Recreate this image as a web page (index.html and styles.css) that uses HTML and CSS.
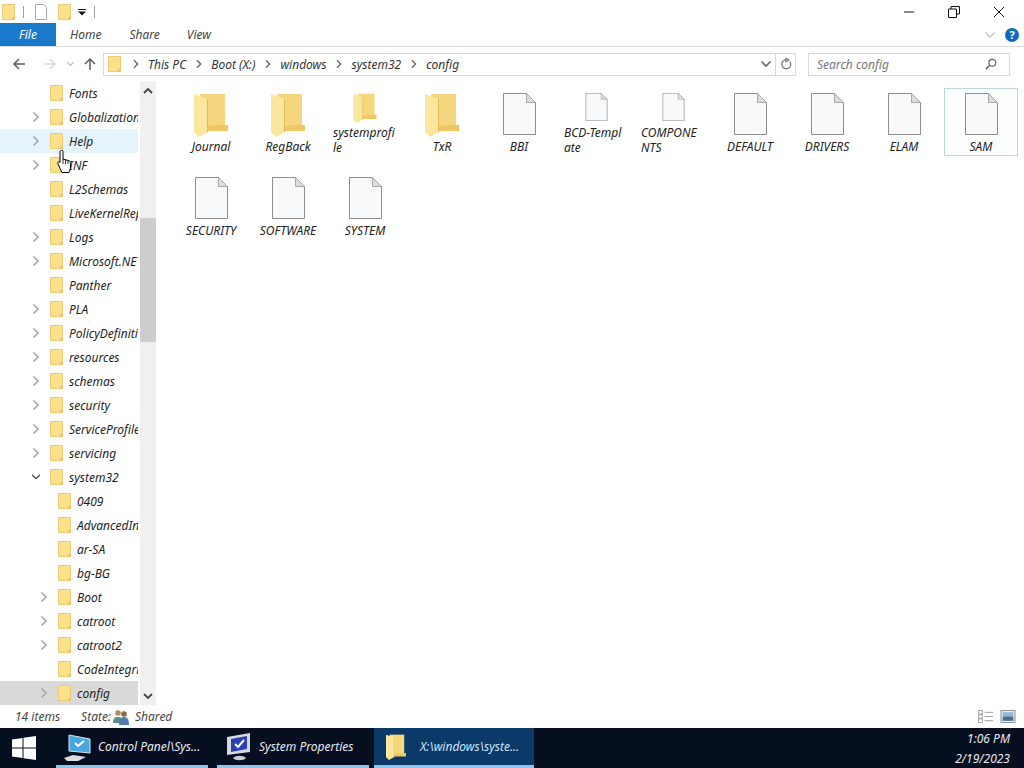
FILE: index.html
```html
<!DOCTYPE html>
<html lang="en">

<head>
  <meta charset="UTF-8" />
  <title>config</title>
  <link rel="stylesheet" href="styles.css">
</head>

<body>
  <svg class="defs" width="0" height="0">
    <symbol id="tree-folder" viewBox="0 0 13 16">
      <path d="M.5.5h12v15H.5z" fill="#fde08a" stroke="#eccb74" />
      <path d="M9 15.5l3.500-4v4z" fill="#e8c262" />
    </symbol>
    <symbol id="big-folder" viewBox="0 0 34 44">
      <path d="M6 1h25v35H6z" fill="#f5d67e" />
      <path d="M24 32h10v6H6v-4z" fill="#eec663" />
      <path d="M0 1l14 5v33l-9 5-5-5z" fill="#fbe69f" />
      <path d="M13 6h1v33l-1 .5z" fill="#e4bd5b" />
    </symbol>
    <symbol id="file" viewBox="0 0 33 42">
      <path d="M.5.500h23l9 9v32H.5z" fill="#f8f9fa" stroke="#8e8e8e" />
      <path d="M23.500.500v9h9z" fill="#dcdcdc" stroke="#a8a8a8" />
    </symbol>
    <symbol id="chev-right" viewBox="0 0 10 12">
      <path d="M2.500 1.500L7 6l-4.500 4.500" fill="none" stroke="currentColor" stroke-width="1.600" />
    </symbol>
    <symbol id="chev-down" viewBox="0 0 12 10">
      <path d="M1.500 2.500L6 7l4.500-4.500" fill="none" stroke="currentColor" stroke-width="1.600" />
    </symbol>
  </svg>

  <div class="window">
    <header class="titlebar">
      <div class="quick">
        <svg class="qa-folder"><use href="#tree-folder" /></svg>
        <span class="qa-sep"></span>
        <svg class="qa-file" viewBox="0 0 12 16"><path d="M.5.500h8l3 3v12H.5z" fill="#fff" stroke="#a9a9a9" /></svg>
        <svg class="qa-folder"><use href="#tree-folder" /></svg>
        <svg class="qa-drop" viewBox="0 0 8 8"><path d="M0 1h8v1H0zM0 3.500h8L4 7.500z" fill="#111" /></svg>
        <span class="qa-sep"></span>
      </div>
      <div class="winbtns">
        <svg viewBox="0 0 12 12"><path d="M1 6h10" stroke="#111" fill="none" /></svg>
        <svg viewBox="0 0 12 12"><path d="M.5 3h8v8.500h-8zM3 3V.5h8.500V8H8.500" stroke="#111" fill="none" /></svg>
        <svg viewBox="0 0 12 12"><path d="M1 1l10 10M11 1L1 11" stroke="#111" fill="none" /></svg>
      </div>
    </header>

    <nav class="ribbon">
      <div class="tab tab-file">File</div>
      <div class="tab tab-home">Home</div>
      <div class="tab tab-share">Share</div>
      <div class="tab tab-view">View</div>
      <svg class="ribbon-chev"><use href="#chev-down" /></svg>
      <span class="help">?</span>
    </nav>

    <div class="addressrow">
      <svg class="nav-btn nav-back" viewBox="0 0 14 14"><path d="M13 7H2M7 2L2 7l5 5" fill="none" stroke="#5f5f5f" stroke-width="1.500" /></svg>
      <svg class="nav-btn nav-fwd" viewBox="0 0 14 14"><path d="M1 7h11M7 2l5 5-5 5" fill="none" stroke="#d9d9d9" stroke-width="1.500" /></svg>
      <svg class="nav-drop"><use href="#chev-down" /></svg>
      <svg class="nav-btn nav-up" viewBox="0 0 14 14"><path d="M7 13V2M2 7l5-5 5 5" fill="none" stroke="#5f5f5f" stroke-width="1.500" /></svg>
      <div class="address">
        <svg class="addr-folder"><use href="#tree-folder" /></svg>
        <svg class="crumb-chev"><use href="#chev-right" /></svg><span>This PC</span>
        <svg class="crumb-chev"><use href="#chev-right" /></svg><span>Boot (X:)</span>
        <svg class="crumb-chev"><use href="#chev-right" /></svg><span>windows</span>
        <svg class="crumb-chev"><use href="#chev-right" /></svg><span>system32</span>
        <svg class="crumb-chev"><use href="#chev-right" /></svg><span>config</span>
        <svg class="addr-drop"><use href="#chev-down" /></svg>
        <div class="addr-refresh">
          <svg viewBox="0 0 12 12"><path d="M9.800 3.500A4.500 4.500 0 1 1 6 1.800M6 0v4l3-2z" fill="none" stroke="#777" stroke-width="1.200" /></svg>
        </div>
      </div>
      <div class="search">
        <span>Search config</span>
        <svg viewBox="0 0 14 14"><circle cx="8.500" cy="5.500" r="4" fill="none" stroke="#666" stroke-width="1.400" /><path d="M5.500 8.500L1 13" stroke="#666" stroke-width="1.800" /></svg>
      </div>
    </div>

    <main class="content">
      <aside class="treepane">
        <ul class="tree">
          <li class="row"><span class="arrow"></span><svg class="folder"><use href="#tree-folder" /></svg><span class="name">Fonts</span></li>
          <li class="row"><svg class="arrow"><use href="#chev-right" /></svg><svg class="folder"><use href="#tree-folder" /></svg><span class="name">Globalization</span></li>
          <li class="row hover"><svg class="arrow"><use href="#chev-right" /></svg><svg class="folder"><use href="#tree-folder" /></svg><span class="name">Help</span></li>
          <li class="row"><svg class="arrow"><use href="#chev-right" /></svg><svg class="folder"><use href="#tree-folder" /></svg><span class="name">INF</span></li>
          <li class="row"><span class="arrow"></span><svg class="folder"><use href="#tree-folder" /></svg><span class="name">L2Schemas</span></li>
          <li class="row"><span class="arrow"></span><svg class="folder"><use href="#tree-folder" /></svg><span class="name">LiveKernelReports</span></li>
          <li class="row"><svg class="arrow"><use href="#chev-right" /></svg><svg class="folder"><use href="#tree-folder" /></svg><span class="name">Logs</span></li>
          <li class="row"><svg class="arrow"><use href="#chev-right" /></svg><svg class="folder"><use href="#tree-folder" /></svg><span class="name">Microsoft.NET</span></li>
          <li class="row"><span class="arrow"></span><svg class="folder"><use href="#tree-folder" /></svg><span class="name">Panther</span></li>
          <li class="row"><svg class="arrow"><use href="#chev-right" /></svg><svg class="folder"><use href="#tree-folder" /></svg><span class="name">PLA</span></li>
          <li class="row"><svg class="arrow"><use href="#chev-right" /></svg><svg class="folder"><use href="#tree-folder" /></svg><span class="name">PolicyDefinitions</span></li>
          <li class="row"><svg class="arrow"><use href="#chev-right" /></svg><svg class="folder"><use href="#tree-folder" /></svg><span class="name">resources</span></li>
          <li class="row"><svg class="arrow"><use href="#chev-right" /></svg><svg class="folder"><use href="#tree-folder" /></svg><span class="name">schemas</span></li>
          <li class="row"><svg class="arrow"><use href="#chev-right" /></svg><svg class="folder"><use href="#tree-folder" /></svg><span class="name">security</span></li>
          <li class="row"><svg class="arrow"><use href="#chev-right" /></svg><svg class="folder"><use href="#tree-folder" /></svg><span class="name">ServiceProfiles</span></li>
          <li class="row"><svg class="arrow"><use href="#chev-right" /></svg><svg class="folder"><use href="#tree-folder" /></svg><span class="name">servicing</span></li>
          <li class="row"><svg class="arrow open"><use href="#chev-down" /></svg><svg class="folder"><use href="#tree-folder" /></svg><span class="name">system32</span></li>
          <li class="row sub"><span class="arrow"></span><svg class="folder"><use href="#tree-folder" /></svg><span class="name">0409</span></li>
          <li class="row sub"><span class="arrow"></span><svg class="folder"><use href="#tree-folder" /></svg><span class="name">AdvancedInstallers</span></li>
          <li class="row sub"><span class="arrow"></span><svg class="folder"><use href="#tree-folder" /></svg><span class="name">ar-SA</span></li>
          <li class="row sub"><span class="arrow"></span><svg class="folder"><use href="#tree-folder" /></svg><span class="name">bg-BG</span></li>
          <li class="row sub"><svg class="arrow"><use href="#chev-right" /></svg><svg class="folder"><use href="#tree-folder" /></svg><span class="name">Boot</span></li>
          <li class="row sub"><svg class="arrow"><use href="#chev-right" /></svg><svg class="folder"><use href="#tree-folder" /></svg><span class="name">catroot</span></li>
          <li class="row sub"><svg class="arrow"><use href="#chev-right" /></svg><svg class="folder"><use href="#tree-folder" /></svg><span class="name">catroot2</span></li>
          <li class="row sub"><span class="arrow"></span><svg class="folder"><use href="#tree-folder" /></svg><span class="name">CodeIntegrity</span></li>
          <li class="row sub current"><svg class="arrow"><use href="#chev-right" /></svg><svg class="folder"><use href="#tree-folder" /></svg><span class="name">config</span></li>
        </ul>
        <div class="scrollbar">
          <svg class="sb-arrow" viewBox="0 0 10 8"><path d="M1 6l4-4 4 4" fill="none" stroke="#444" stroke-width="1.800" /></svg>
          <div class="sb-thumb"></div>
          <svg class="sb-arrow sb-down" viewBox="0 0 10 8"><path d="M1 2l4 4 4-4" fill="none" stroke="#444" stroke-width="1.800" /></svg>
        </div>
      </aside>

      <section class="files">
        <div class="item"><svg class="ico-folder"><use href="#big-folder" /></svg><span class="label">Journal</span></div>
        <div class="item"><svg class="ico-folder"><use href="#big-folder" /></svg><span class="label">RegBack</span></div>
        <div class="item"><svg class="ico-folder"><use href="#big-folder" /></svg><span class="label">systemprofile</span></div>
        <div class="item"><svg class="ico-folder"><use href="#big-folder" /></svg><span class="label">TxR</span></div>
        <div class="item"><svg class="ico-file"><use href="#file" /></svg><span class="label">BBI</span></div>
        <div class="item"><svg class="ico-file"><use href="#file" /></svg><span class="label">BCD-Template</span></div>
        <div class="item"><svg class="ico-file"><use href="#file" /></svg><span class="label">COMPONENTS</span></div>
        <div class="item"><svg class="ico-file"><use href="#file" /></svg><span class="label">DEFAULT</span></div>
        <div class="item"><svg class="ico-file"><use href="#file" /></svg><span class="label">DRIVERS</span></div>
        <div class="item"><svg class="ico-file"><use href="#file" /></svg><span class="label">ELAM</span></div>
        <div class="item selected"><svg class="ico-file"><use href="#file" /></svg><span class="label">SAM</span></div>
        <div class="item"><svg class="ico-file"><use href="#file" /></svg><span class="label">SECURITY</span></div>
        <div class="item"><svg class="ico-file"><use href="#file" /></svg><span class="label">SOFTWARE</span></div>
        <div class="item"><svg class="ico-file"><use href="#file" /></svg><span class="label">SYSTEM</span></div>
      </section>

      <!-- mouse pointer in the shot -->
      <svg class="cursor" viewBox="0 0 14 23">
        <path d="M3 1.500c0-1.500 3-1.500 3 0V9l5 1.500c2 .5 2.500 1.500 2.500 3V18l-1.500 4.500H5L1 14c-1-2 1-3 2-1.500z" fill="#fff" stroke="#000" stroke-linejoin="round" />
        <path d="M6 9v5M8.500 10v4M11 10.500V14" stroke="#000" stroke-width=".8" />
      </svg>
    </main>

    <footer class="statusbar">
      <span class="count">14 items</span>
      <span class="state">State:</span>
      <svg class="people" viewBox="0 0 16 16">
        <circle cx="5" cy="4" r="2.800" fill="#b98a5e" />
        <path d="M0 14c0-5 2-6 5-6s5 1 5 6z" fill="#5d8f8a" />
        <circle cx="11" cy="5" r="2.800" fill="#8a6a4a" />
        <path d="M6 16c0-6 2-8 5-8s5 2 5 8z" fill="#4f7fae" />
      </svg>
      <span class="shared">Shared</span>
      <div class="views">
        <svg viewBox="0 0 17 14"><path d="M.5.500h4v4h-4zM.5 5h4v4h-4zM.5 9.500h4v4h-4z" fill="#fff" stroke="#999" /><path d="M7 2.500h9M7 7h9M7 11.500h9" stroke="#999" /></svg>
        <svg viewBox="0 0 14 12"><path d="M.5.500h13v11H.5z" fill="#e6eef5" stroke="#999" /><path d="M2 2h10v4H2z" fill="#8fb8d8" /><path d="M2 6h10v4H2z" fill="#4d6d8a" /></svg>
      </div>
    </footer>
  </div>

  <div class="taskbar">
    <svg class="start" viewBox="0 0 24 24"><path d="M0 3.500L10.500 2v9.500H0zM11.500 1.800L24 0v11.500H11.500zM0 12.500h10.500V22L0 20.500zM11.500 12.500H24V24l-12.500-1.800z" fill="#fff" /></svg>
    <div class="task">
      <svg class="task-ico" viewBox="0 0 30 30">
        <path d="M6 3l21 4v14L6 19z" fill="#4aa6dc" stroke="#d5e6f2" />
        <path d="M12 11l3 3 6-5" fill="none" stroke="#fff" stroke-width="2" />
        <path d="M1 26l9-3 13 2-8 4H4z" fill="#d9dde0" />
      </svg>
      <span>Control Panel\Sys...</span>
    </div>
    <div class="task">
      <svg class="task-ico" viewBox="0 0 30 30">
        <path d="M3 5l23-4v19L3 23z" fill="#d5d9de" />
        <path d="M7 7l16-3v13L7 20z" fill="#2a3fb0" />
        <path d="M11 12l3 3 6-7" fill="none" stroke="#fff" stroke-width="2" />
        <path d="M9 26c3-3 10-3 13 0-2 3-11 3-13 0z" fill="#c9cdd2" />
      </svg>
      <span>System Properties</span>
    </div>
    <div class="task active">
      <svg class="task-ico task-folder"><use href="#big-folder" /></svg>
      <span>X:\windows\syste...</span>
    </div>
    <div class="clock">
      <span>1:06 PM</span>
      <span>2/19/2023</span>
    </div>
  </div>
</body>

</html>
```

FILE: styles.css
```css
* {
  box-sizing: border-box;
}

html,
body {
  margin: 0;
  padding: 0;
}

body {
  width: 1024px;
  height: 768px;
  overflow: hidden;
  display: flex;
  flex-direction: column;
  background: #fff;
  font-family: "Noto Sans", "Open Sans", sans-serif;
  font-size: 12px;
  font-style: italic;
  color: #1e1e1e;
}

.defs {
  position: absolute;
}

.window {
  flex: 1;
  display: flex;
  flex-direction: column;
  min-height: 0;
  position: relative;
}

/* title bar */
.titlebar {
  height: 23px;
  display: flex;
  align-items: center;
  justify-content: space-between;
}

.quick {
  display: flex;
  align-items: center;
  padding-left: 2px;
}

.qa-folder {
  width: 13px;
  height: 16px;
}

.qa-sep {
  width: 1px;
  height: 12px;
  margin: 0 11px 0 8px;
  background: #a0a0a0;
}

.qa-file {
  width: 12px;
  height: 16px;
  margin-right: 11px;
}

.qa-drop {
  width: 8px;
  height: 8px;
  margin: 0 0 0 7px;
}

.quick .qa-drop + .qa-sep {
  margin-left: 8px;
}

.winbtns {
  display: flex;
  gap: 33px;
  padding-right: 19px;
}

.winbtns svg {
  width: 12px;
  height: 12px;
}

/* ribbon tabs */
.ribbon {
  height: 24px;
  display: flex;
  align-items: center;
  border-bottom: 1px solid #dadbdc;
  color: #444;
}

.tab {
  line-height: 23px;
}

.tab-file {
  width: 56px;
  height: 23px;
  text-align: center;
  color: #fff;
  background: #1979ca;
}

.tab-home {
  margin-left: 14px;
}

.tab-share {
  margin-left: 28px;
}

.tab-view {
  margin-left: 27px;
}

.ribbon-chev {
  width: 12px;
  height: 10px;
  margin-left: auto;
  color: #c8c8c8;
}

.help {
  width: 14px;
  height: 14px;
  margin: 0 5px 0 9px;
  border-radius: 50%;
  background: #0f6cbd;
  color: #fff;
  font-size: 11px;
  font-weight: bold;
  font-style: normal;
  line-height: 14px;
  text-align: center;
}

/* back / up / address / search */
.addressrow {
  height: 34px;
  display: flex;
  align-items: center;
  padding: 0 12px;
}

.nav-btn {
  width: 14px;
  height: 14px;
}

.nav-fwd {
  margin-left: 17px;
}

.nav-drop {
  width: 9px;
  height: 8px;
  margin-left: 9px;
  color: #bbb;
}

.nav-up {
  margin-left: 8px;
}

.address {
  width: 693px;
  height: 23px;
  margin-left: 6px;
  display: flex;
  align-items: center;
  padding-left: 4px;
  border: 1px solid #d9d9d9;
  color: #333;
}

.addr-folder {
  width: 13px;
  height: 16px;
  margin-right: 5px;
}

.crumb-chev {
  width: 10px;
  height: 10px;
  margin: 0 7px 0 5px;
  color: #666;
}

.address span + .crumb-chev {
  margin-left: 8px;
}

.addr-drop {
  width: 12px;
  height: 10px;
  margin-left: auto;
  margin-right: 3px;
  color: #666;
}

.addr-refresh {
  width: 20px;
  height: 100%;
  display: flex;
  align-items: center;
  justify-content: center;
  border-left: 1px solid #d9d9d9;
}

.addr-refresh svg {
  width: 12px;
  height: 12px;
}

.search {
  width: 202px;
  height: 23px;
  margin-left: 12px;
  display: flex;
  align-items: center;
  justify-content: space-between;
  padding: 0 12px 0 8px;
  border: 1px solid #d9d9d9;
  color: #777;
}

.search svg {
  width: 12px;
  height: 12px;
}

/* tree + file area */
.content {
  flex: 1;
  min-height: 0;
  display: flex;
}

.treepane {
  width: 156px;
  display: flex;
  flex-shrink: 0;
}

.tree {
  width: 138px;
  margin: 0 2px 0 0;
  padding: 0;
  list-style: none;
}

.row {
  height: 24px;
  display: flex;
  align-items: center;
  padding-left: 31px;
  overflow: hidden;
  white-space: nowrap;
}

.row.sub {
  padding-left: 39px;
}

.row.hover {
  background: #e5f3fb;
}

.row.current {
  background: #d9d9d9;
}

.arrow {
  width: 10px;
  height: 12px;
  margin-right: 9px;
  flex-shrink: 0;
  color: #a6a6a6;
}

.arrow.open {
  color: #444;
}

.folder {
  width: 13px;
  height: 16px;
  margin-right: 6px;
  flex-shrink: 0;
}

.scrollbar {
  width: 16px;
  display: flex;
  flex-direction: column;
  background: #f0f0f0;
}

.sb-arrow {
  width: 10px;
  height: 8px;
  margin: 6px 3px 0;
  flex-shrink: 0;
}

.sb-thumb {
  height: 124px;
  margin-top: 123px;
  background: #cdcdcd;
}

.sb-down {
  margin-top: auto;
  margin-bottom: 5px;
}

.files {
  flex: 1;
  display: grid;
  grid-template-columns: repeat(11, 74px);
  grid-auto-rows: 68px;
  column-gap: 3px;
  row-gap: 16px;
  align-content: start;
  padding: 7px 0 0 18px;
}

.item {
  display: flex;
  flex-direction: column;
  align-items: center;
  padding-top: 4px;
  border: 1px solid transparent;
  color: #222;
  line-height: 15px;
}

.item.selected {
  border-color: #b9d7dc;
  background: #fdfefe;
}

.ico-folder {
  width: 34px;
  height: 44px;
  margin-bottom: 2px;
}

.ico-file {
  width: 33px;
  height: 42px;
  margin-bottom: 4px;
}

.label {
  display: inline-block;
  max-width: 64px;
  word-break: break-all;
}

.cursor {
  position: absolute;
  left: 57px;
  top: 150px;
  width: 14px;
  height: 23px;
}

/* status bar */
.statusbar {
  height: 23px;
  display: flex;
  align-items: center;
  padding: 0 8px 0 15px;
  color: #444;
}

.state {
  margin-left: 21px;
}

.people {
  width: 16px;
  height: 16px;
  margin: 0 6px 0 2px;
}

.views {
  display: flex;
  align-items: center;
  gap: 6px;
  margin-left: auto;
}

.views svg {
  width: 16px;
  height: 13px;
}

/* taskbar */
.taskbar {
  height: 40px;
  flex-shrink: 0;
  display: flex;
  align-items: stretch;
  background: #050f20;
  color: #e6ebf0;
}

.start {
  width: 24px;
  height: 24px;
  margin: 8px 20px 0 12px;
}

.task {
  width: 152px;
  margin-right: 9px;
  display: flex;
  align-items: center;
  gap: 5px;
  padding-left: 7px;
  border-bottom: 3px solid #8fc4ec;
}

.task.active {
  width: 160px;
  margin-left: -4px;
  padding-left: 12px;
  gap: 14px;
  background: #0b3a68;
  color: #cfe3f5;
}

.task-ico {
  width: 30px;
  height: 30px;
  flex-shrink: 0;
}

.task-folder {
  width: 20px;
  height: 28px;
}

.clock {
  margin-left: auto;
  width: 104px;
  display: flex;
  flex-direction: column;
  align-items: flex-end;
  justify-content: center;
  gap: 3px;
  padding-right: 14px;
  line-height: 17px;
  text-align: center;
}
```
